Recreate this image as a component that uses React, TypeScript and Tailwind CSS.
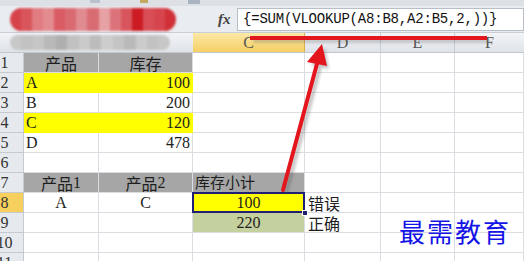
import clsx from "clsx";
import type { ReactNode } from "react";

const ROW = "grid grid-cols-[24px_75px_94px_112px_76px_74px_1fr]";
const MONO = "font-['Liberation_Mono','Noto_Sans_CJK_SC',monospace]";
const SERIF = "font-['Liberation_Serif','Noto_Sans_CJK_SC',serif] text-[16px]";
const CJK = "font-['Noto_Sans_CJK_SC',sans-serif]";

type CellProps = { children?: ReactNode; className?: string };

function Cell({ children, className }: CellProps) {
  return (
    <div
      className={clsx(
        "relative h-[20px] border-r border-b border-[#dadde1] flex items-center px-[3px] whitespace-nowrap text-[#1e1e1e]",
        className
      )}
    >
      {children}
    </div>
  );
}

function RowHead({ n, active }: { n: number; active?: boolean }) {
  return (
    <div
      className={clsx(
        "h-[20px] overflow-hidden border-r border-b border-[#c5cad1]",
        active ? "bg-[#f6cf5c]" : "bg-[#e6e9ee]"
      )}
    >
      <div className={clsx(SERIF, "-ml-[10px] w-[29px] h-full flex items-center justify-center text-[#333]")}>{n}</div>
    </div>
  );
}

const redBlocks = ["#d6434b", "#d9555c", "#e07c82", "#e38c90", "#d95b63", "#da6a71", "#e08b90", "#d96c73", "#e6a1a4", "#dd737a", "#d9555d", "#cc1b23", "#d84e56", "#d6454d", "#d13038"];
const grayBlocks = ["#c8c8c8", "#c2c2c2", "#c6c6c6", "#b9b9b9", "#afafaf", "#c1c1c1", "#cacaca", "#bcbcbc", "#cdcdcd", "#c4c4c4", "#bababa", "#cbcbcb", "#c2c2c2", "#c7c7c7"];

export default function App() {
  const gray = "bg-[#a6a6a6] border-[#a6a6a6]";
  const yellow = "bg-[#ffff00] border-[#ffff00]";
  const colHead = clsx(SERIF, "flex items-center justify-center text-[#555]");

  return (
    <div className="relative w-[524px] h-[261px] overflow-hidden bg-white">
      {/* toolbar remnant */}
      <div className="h-[6px] bg-[#dde1e6] flex items-start gap-[40px] pl-[90px]">
        <div className="w-[10px] h-[3px] bg-[#b9c2cc]" />
        <div className="w-[8px] h-[3px] bg-[#c2a860]" />
        <div className="w-[12px] h-[4px] bg-[#aab4c0]" />
      </div>

      {/* formula bar */}
      <div className="h-[27px] bg-[#e9ecf0] flex items-center border-b border-[#c9ced5]">
        <div className="ml-[10px] w-[166px] h-[23px] rounded-full overflow-hidden flex blur-[1px]">
          {redBlocks.map((c, i) => (
            <div key={i} className="flex-1 h-full" style={{ background: c }} />
          ))}
        </div>
        <div className="ml-[42px] w-[18px] text-[15px] italic font-bold text-[#444] font-['Liberation_Serif',serif]">fx</div>
        <div className={clsx(MONO, "ml-[1px] flex-1 h-[23px] bg-white border border-[#b8bec6] flex items-center pl-[5px] text-[14px] text-[#111] tracking-[-0.2px]")}>
          {"{=SUM(VLOOKUP(A8:B8,A2:B5,2,))}"}
        </div>
      </div>

      {/* column headers */}
      <div className="h-[20px] flex bg-gradient-to-b from-[#f2f4f7] to-[#dfe3e9] border-b border-[#c3c8cf]">
        <div className="w-[193px] flex items-center">
          <div className="ml-[10px] w-[160px] h-[15px] rounded-full overflow-hidden flex blur-[1px]">
            {grayBlocks.map((c, i) => (
              <div key={i} className="flex-1 h-full" style={{ background: c }} />
            ))}
          </div>
        </div>
        <div className={clsx(colHead, "w-[112px] bg-gradient-to-b from-[#fbe8a6] to-[#f5cf62] border-r border-[#d9b04e]")}>C</div>
        <div className={clsx(colHead, "w-[76px] border-r border-[#c8cdd4]")}>D</div>
        <div className={clsx(colHead, "w-[74px] border-r border-[#c8cdd4]")}>E</div>
        <div className={clsx(colHead, "flex-1")}>F</div>
      </div>

      {/* row 1 */}
      <div className={ROW}>
        <RowHead n={1} />
        <Cell className={clsx(gray, CJK, "justify-center text-[16px]")}>产品</Cell>
        <Cell className={clsx(gray, CJK, "justify-center text-[16px]")}>库存</Cell>
        <Cell />
        <Cell />
        <Cell />
        <Cell />
      </div>

      {/* rows 2-5 */}
      {[
        { n: 2, p: "A", q: "100", hl: true },
        { n: 3, p: "B", q: "200", hl: false },
        { n: 4, p: "C", q: "120", hl: true },
        { n: 5, p: "D", q: "478", hl: false },
      ].map((r) => (
        <div key={r.n} className={ROW}>
          <RowHead n={r.n} />
          <Cell className={clsx(SERIF, "pl-[2px]", r.hl && yellow)}>{r.p}</Cell>
          <Cell className={clsx(SERIF, "justify-end pr-[2px]", r.hl && yellow)}>{r.q}</Cell>
          <Cell />
          <Cell />
          <Cell />
          <Cell />
        </div>
      ))}

      {/* row 6 */}
      <div className={ROW}>
        <RowHead n={6} />
        <Cell />
        <Cell />
        <Cell />
        <Cell />
        <Cell />
        <Cell />
      </div>

      {/* row 7 */}
      <div className={ROW}>
        <RowHead n={7} />
        <Cell className={clsx(gray, CJK, "justify-center text-[16px]")}>
          产品<span className={SERIF}>1</span>
        </Cell>
        <Cell className={clsx(gray, CJK, "justify-center text-[16px]")}>
          产品<span className={SERIF}>2</span>
        </Cell>
        <Cell className={clsx(gray, CJK, "text-[15px] pl-[2px]")}>库存小计</Cell>
        <Cell />
        <Cell />
        <Cell />
      </div>

      {/* row 8 */}
      <div className={ROW}>
        <RowHead n={8} active />
        <Cell className={clsx(SERIF, "justify-center")}>A</Cell>
        <Cell className={clsx(SERIF, "justify-center")}>C</Cell>
        <Cell className={clsx(yellow, SERIF, "justify-center")}>
          100
          <div className="absolute -left-[1px] -top-[1px] -right-[1px] -bottom-[1px] border-2 border-[#1f1f73]" />
          <div className="absolute -right-[4px] -bottom-[4px] w-[6px] h-[6px] bg-[#1f1f73] border border-white z-10" />
        </Cell>
        <Cell className={clsx(CJK, "text-[16px] pl-[3px]")}>错误</Cell>
        <Cell />
        <Cell />
      </div>

      {/* row 9 */}
      <div className={ROW}>
        <RowHead n={9} />
        <Cell />
        <Cell />
        <Cell className={clsx("bg-[#c4d09e] border-[#c4d09e]", SERIF, "justify-center")}>220</Cell>
        <Cell className={clsx(CJK, "text-[16px] pl-[3px]")}>正确</Cell>
        <Cell />
        <Cell />
      </div>

      {/* rows 10-11 */}
      {[10, 11].map((n) => (
        <div key={n} className={ROW}>
          <RowHead n={n} />
          <Cell />
          <Cell />
          <Cell />
          <Cell />
          <Cell />
          <Cell />
        </div>
      ))}

      {/* watermark */}
      <div className="absolute left-[399px] top-[211px] text-[26px] tracking-[2px] text-[#1414e6] font-['Noto_Sans_CJK_SC',serif]">
        最需教育
      </div>

      {/* annotation arrow */}
      <svg className="absolute inset-0 pointer-events-none" width="524" height="261" viewBox="0 0 524 261">
        <defs>
          <filter id="sh" x="-20%" y="-20%" width="140%" height="140%">
            <feGaussianBlur stdDeviation="1.5" />
          </filter>
        </defs>
        <g opacity="0.35" filter="url(#sh)" transform="translate(3 3)">
          <line x1="283" y1="190" x2="318" y2="60" stroke="#555" strokeWidth="4" />
          <polygon points="322,45 308,62 326,66" fill="#555" />
          <line x1="250" y1="38" x2="487" y2="38" stroke="#555" strokeWidth="3" />
        </g>
        <line x1="250" y1="38" x2="487" y2="38" stroke="#e3151d" strokeWidth="4" />
        <line x1="283" y1="190" x2="318" y2="60" stroke="#e3151d" strokeWidth="4" strokeLinecap="round" />
        <polygon points="322,44 307,62 327,66" fill="#e3151d" />
      </svg>
    </div>
  );
}
